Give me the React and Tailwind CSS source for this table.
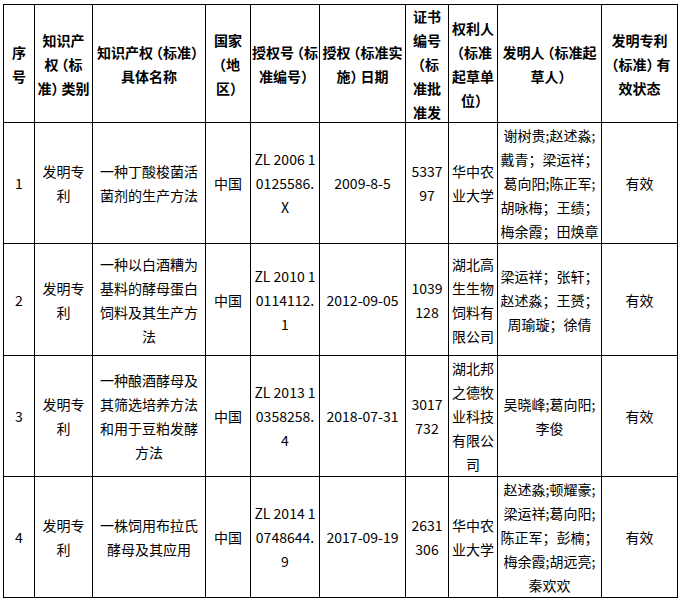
import React from 'react';

const widths = ['w-[31px]', 'w-[58px]', 'w-[113px]', 'w-[45px]', 'w-[69px]', 'w-[86px]', 'w-[43px]', 'w-[49px]', 'w-[104px]', 'w-[76px]'];

const header = [
  ['序', '号'],
  ['知识产', '权（标', '准）类别'],
  ['知识产权（标准）', '具体名称'],
  ['国家', '（地', '区）'],
  ['授权号（标', '准编号）'],
  ['授权（标准实', '施）日期'],
  ['证书', '编号', '（标', '准批', '准发'],
  ['权利人', '（标准', '起草单', '位）'],
  ['发明人（标准起', '草人）'],
  ['发明专利', '（标准）有', '效状态'],
];

const rows = [
  {
    h: 'h-[120px]',
    cells: [
      ['1'],
      ['发明专', '利'],
      ['一种丁酸梭菌活', '菌剂的生产方法'],
      ['中国'],
      ['ZL 2006 1', '0125586.', 'X'],
      ['2009-8-5'],
      ['5337', '97'],
      ['华中农', '业大学'],
      ['谢树贵;赵述淼;', '戴青；梁运祥；', '葛向阳;陈正军;', '胡咏梅；王绩；', '梅余霞；田焕章'],
      ['有效'],
    ],
  },
  {
    h: 'h-[111px]',
    cells: [
      ['2'],
      ['发明专', '利'],
      ['一种以白酒糟为', '基料的酵母蛋白', '饲料及其生产方', '法'],
      ['中国'],
      ['ZL 2010 1', '0114112.', '1'],
      ['2012-09-05'],
      ['1039', '128'],
      ['湖北高', '生生物', '饲料有', '限公司'],
      ['梁运祥；张轩；', '赵述淼；王赟；', '周瑜璇；徐倩'],
      ['有效'],
    ],
  },
  {
    h: 'h-[120px]',
    cells: [
      ['3'],
      ['发明专', '利'],
      ['一种酿酒酵母及', '其筛选培养方法', '和用于豆粕发酵', '方法'],
      ['中国'],
      ['ZL 2013 1', '0358258.', '4'],
      ['2018-07-31'],
      ['3017', '732'],
      ['湖北邦', '之德牧', '业科技', '有限公', '司'],
      ['吴晓峰;葛向阳;', '李俊'],
      ['有效'],
    ],
  },
  {
    h: 'h-[120px]',
    cells: [
      ['4'],
      ['发明专', '利'],
      ['一株饲用布拉氏', '酵母及其应用'],
      ['中国'],
      ['ZL 2014 1', '0748644.', '9'],
      ['2017-09-19'],
      ['2631', '306'],
      ['华中农', '业大学'],
      ['赵述淼;顿耀豪;', '梁运祥;葛向阳;', '陈正军；彭楠；', '梅余霞;胡远亮;', '秦欢欢'],
      ['有效'],
    ],
  },
];

// full-width brackets are set a little tighter in the original doc
const tight = (text) =>
  Array.from(text).map((ch, i) => {
    if (ch === '（') return <span key={i} className="ml-[3px] [font-feature-settings:'halt']">{ch}</span>;
    if (ch === '）') return <span key={i} className="mr-[3px] [font-feature-settings:'halt']">{ch}</span>;
    return ch;
  });

const Cell = ({ lines, h, bold }) => (
  <td className="border border-black p-0 align-middle">
    <div className={`${h} flex flex-col items-center justify-center text-center whitespace-nowrap leading-[24px] ${bold ? 'font-bold' : ''}`}>
      {lines.map((l, i) => (
        <span key={i}>{bold ? tight(l) : l}</span>
      ))}
    </div>
  </td>
);

export default function App() {
  return (
    <div className="bg-white w-[684px] h-[602px] pt-[4px] pl-[3px] text-black text-[14px] font-['Noto_Sans_CJK_SC','Noto_Sans',sans-serif]">
      <table className="border-collapse table-fixed w-[675px]">
        <colgroup>
          {widths.map((w, i) => (
            <col key={i} className={w} />
          ))}
        </colgroup>
        <tbody>
          <tr>
            {header.map((lines, i) => (
              <Cell key={i} lines={lines} h="h-[117px]" bold />
            ))}
          </tr>
          {rows.map((r, ri) => (
            <tr key={ri}>
              {r.cells.map((lines, i) => (
                <Cell key={i} lines={lines} h={r.h} />
              ))}
            </tr>
          ))}
        </tbody>
      </table>
    </div>
  );
}
